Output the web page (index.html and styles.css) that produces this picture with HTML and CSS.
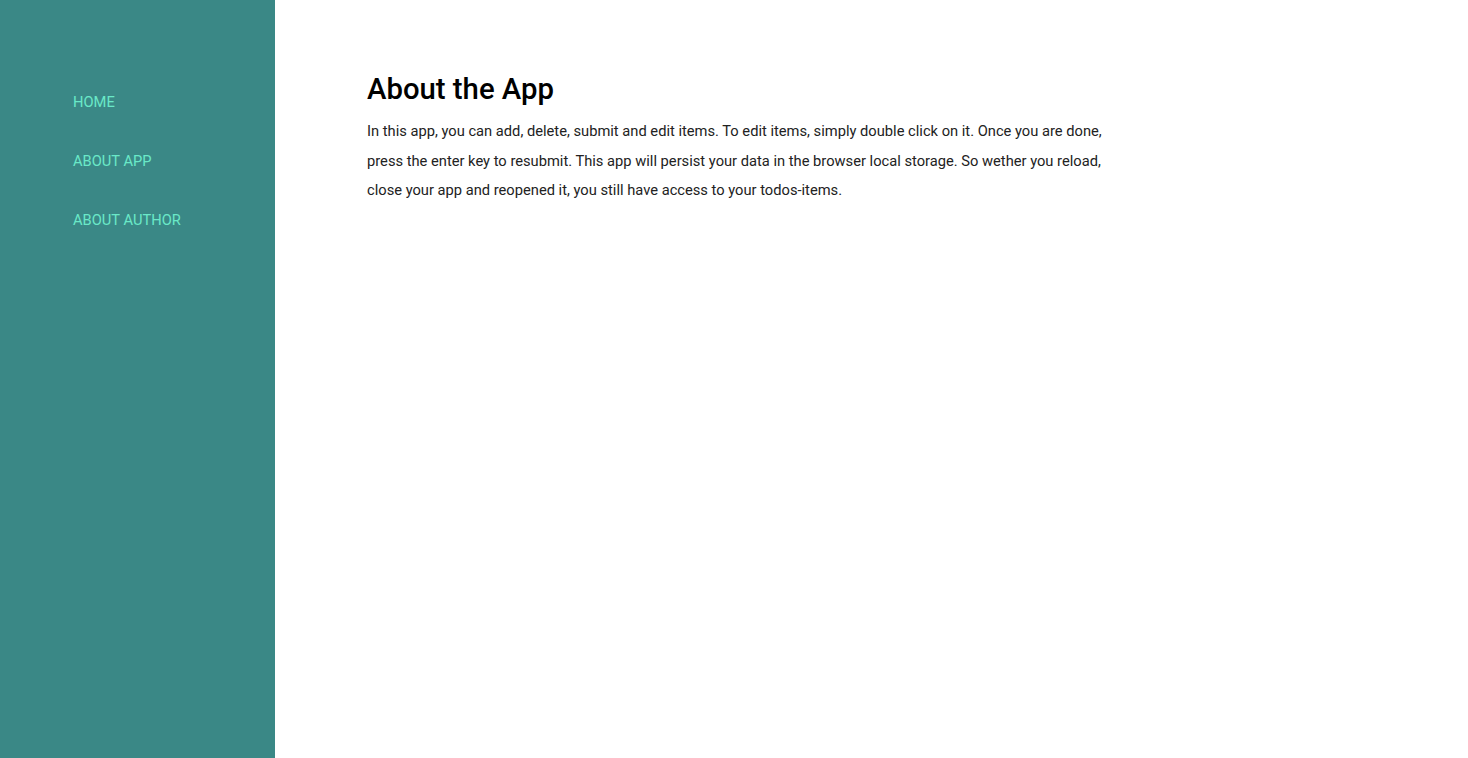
FILE: index.html
```html
<!DOCTYPE html>
<html>
<head>
<meta charset="utf-8">
<link rel="stylesheet" href="styles.css">
</head>
<body>
<div class="layout">
  <nav class="sidebar">
    <a class="nav-link" href="#">HOME</a>
    <a class="nav-link" href="#">ABOUT APP</a>
    <a class="nav-link" href="#">ABOUT AUTHOR</a>
  </nav>
  <main class="content">
    <h1 class="title">About the App</h1>
    <p class="text">In this app, you can add, delete, submit and edit items. To edit items, simply double click on it. Once you are done, press the enter key to resubmit. This app will persist your data in the browser local storage. So wether you reload, close your app and reopened it, you still have access to your todos-items.</p>
  </main>
</div>
</body>
</html>
```
FILE: styles.css
```css
html, body {
  margin: 0;
  padding: 0;
  height: 100%;
}
body {
  font-family: Roboto, "Liberation Sans", sans-serif;
  background: #fff;
}
.layout {
  display: flex;
  height: 758px;
}
.sidebar {
  width: 275px;
  flex-shrink: 0;
  background: #3a8886;
  display: flex;
  flex-direction: column;
  padding: 92px 0 0 73px;
  box-sizing: border-box;
  gap: 39px;
}
.nav-link {
  color: #6ae8c8;
  text-decoration: none;
  font-size: 14.7px;
  line-height: 20px;
}
.content {
  padding: 71px 0 0 92px;
}
.title {
  margin: 0;
  font-size: 29.3px;
  font-weight: 500;
  color: #000;
  line-height: 36px;
}
.text {
  margin: 10px 0 0;
  width: 748px;
  font-size: 14.7px;
  line-height: 29.5px;
  color: #222;
}
```
